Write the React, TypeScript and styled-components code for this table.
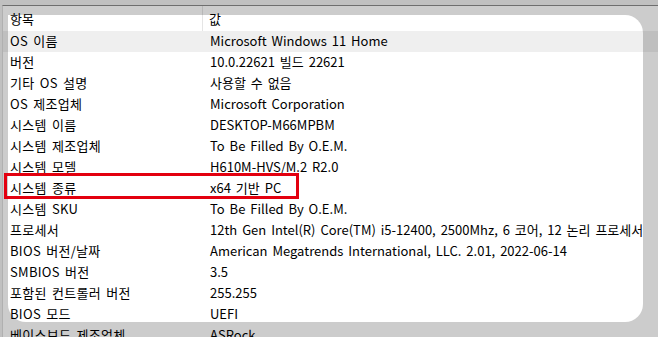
import styled, { createGlobalStyle } from "styled-components";

const GlobalStyle = createGlobalStyle`
	html, body {
		margin: 0;
		padding: 0;
		background: #f0f0f0;
		overflow: hidden;
	}
	body {
		width: 658px;
		height: 337px;
		font-family: "Noto Sans CJK KR", "Noto Sans", sans-serif;
		font-size: 13px;
		word-spacing: 2px;
		color: #000;
	}
`;

type Item = { name: string; value: string };

const items: Item[] = [
	{ name: "OS 이름", value: "Microsoft Windows 11 Home" },
	{ name: "버전", value: "10.0.22621 빌드 22621" },
	{ name: "기타 OS 설명", value: "사용할 수 없음" },
	{ name: "OS 제조업체", value: "Microsoft Corporation" },
	{ name: "시스템 이름", value: "DESKTOP-M66MPBM" },
	{ name: "시스템 제조업체", value: "To Be Filled By O.E.M." },
	{ name: "시스템 모델", value: "H610M-HVS/M.2 R2.0" },
	{ name: "시스템 종류", value: "x64 기반 PC" },
	{ name: "시스템 SKU", value: "To Be Filled By O.E.M." },
	{
		name: "프로세서",
		value: "12th Gen Intel(R) Core(TM) i5-12400, 2500Mhz, 6 코어, 12 논리 프로세서",
	},
	{
		name: "BIOS 버전/날짜",
		value: "American Megatrends International, LLC. 2.01, 2022-06-14",
	},
	{ name: "SMBIOS 버전", value: "3.5" },
	{ name: "포함된 컨트롤러 버전", value: "255.255" },
	{ name: "BIOS 모드", value: "UEFI" },
	{ name: "베이스보드 제조업체", value: "ASRock" },
];

// **LIST VIEW
const Screen = styled.div`
	position: relative;
	width: 658px;
	height: 337px;
	overflow: hidden;
	padding-top: 5px;
	box-sizing: border-box;
`;

const ListView = styled.div`
	margin-left: 2px;
	background: #ffffff;
	border-top: 1px solid #8a8a8a;
	border-left: 1px solid #dcdcdc;
	height: 400px;
`;

const HeaderRow = styled.div`
	display: grid;
	grid-template-columns: 200px 439px;
	height: 25px;
	align-items: stretch;
`;

const HeaderCell = styled.div<{ $divider?: boolean }>`
	display: flex;
	align-items: center;
	padding-left: ${(p) => (p.$divider ? "7px" : "6px")};
	padding-bottom: 1px;
	border-right: ${(p) => (p.$divider ? "1px solid #e5e5e5" : "none")};
	white-space: nowrap;
	overflow: hidden;
`;

const Row = styled.div<{ $selected?: boolean }>`
	display: grid;
	grid-template-columns: 201px 439px;
	height: 21px;
	line-height: 20px;
	background: ${(p) => (p.$selected ? "#efefef" : "transparent")};
`;

const NameCell = styled.div`
	padding-left: 7px;
	letter-spacing: 0.3px;
	white-space: nowrap;
	overflow: hidden;
`;

const ValueCell = styled.div`
	padding-left: 6px;
	white-space: nowrap;
	overflow: hidden;
`;

// **HIGHLIGHTS
const Spotlight = styled.div`
	position: absolute;
	left: 8px;
	top: 15px;
	width: 635px;
	height: 307px;
	border-radius: 0 18px 18px 18px;
	box-shadow: 0 0 0 2000px rgba(0, 0, 0, 0.2);
	pointer-events: none;
`;

const MarkBox = styled.div`
	position: absolute;
	left: 4px;
	top: 173px;
	width: 295px;
	height: 26px;
	border: 3px solid #e3000f;
	box-sizing: border-box;
	pointer-events: none;
`;

export default function App() {
	return (
		<>
			<GlobalStyle />
			<Screen>
				<ListView>
					<HeaderRow>
						<HeaderCell $divider>항목</HeaderCell>
						<HeaderCell>값</HeaderCell>
					</HeaderRow>
					{items.map((it, i) => (
						<Row key={it.name} $selected={i === 0}>
							<NameCell>{it.name}</NameCell>
							<ValueCell>{it.value}</ValueCell>
						</Row>
					))}
				</ListView>
				<Spotlight />
				<MarkBox />
			</Screen>
		</>
	);
}
